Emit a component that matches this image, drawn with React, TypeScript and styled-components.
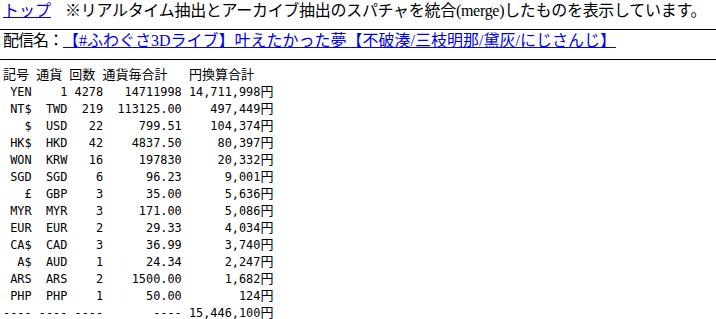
import React from "react";
import styled, { createGlobalStyle } from "styled-components";

interface IRow {
    sign: string;
    code: string;
    count: string;
    total: string;
    yen: string;
}

const GlobalStyle = createGlobalStyle`
    body {
        margin: 0;
        background: #ffffff;
        color: #000000;
        font-family: "Liberation Serif", "Noto Sans CJK JP", serif;
        font-size: 16px;
    }
`;

const Page = styled.div`
    width: 716px;
    overflow: hidden;
`;

const Bar = styled.div`
    display: flex;
    align-items: baseline;
    white-space: nowrap;
    padding: 0 0 7px 3px;
    line-height: 22px;
    border-bottom: 1px solid #000000;
`;

const A = styled.a`
    color: #0000ee;
    text-decoration: underline;
    cursor: pointer;
`;

const Note = styled.span<{ $gap: number; $tight: number }>`
    margin-left: ${(p) => p.$gap}px;
    letter-spacing: ${(p) => p.$tight}px;
`;

const Pre = styled.div`
    margin-top: 7px;
    padding-left: 3px;
    font-family: "DejaVu Sans Mono", monospace;
    font-size: 11.88px;
`;

const Line = styled.div`
    height: 17px;
    line-height: 17px;
    white-space: pre;
    overflow: visible;
`;

const Wide = styled.span`
    font-family: "Noto Sans CJK JP", sans-serif;
    font-size: 13px;
    line-height: 0;
`;

const rows: IRow[] = [
    { sign: "YEN", code: "1", count: "4278", total: "14711998", yen: "14,711,998" },
    { sign: "NT$", code: "TWD", count: "219", total: "113125.00", yen: "497,449" },
    { sign: "$", code: "USD", count: "22", total: "799.51", yen: "104,374" },
    { sign: "HK$", code: "HKD", count: "42", total: "4837.50", yen: "80,397" },
    { sign: "WON", code: "KRW", count: "16", total: "197830", yen: "20,332" },
    { sign: "SGD", code: "SGD", count: "6", total: "96.23", yen: "9,001" },
    { sign: "£", code: "GBP", count: "3", total: "35.00", yen: "5,636" },
    { sign: "MYR", code: "MYR", count: "3", total: "171.00", yen: "5,086" },
    { sign: "EUR", code: "EUR", count: "2", total: "29.33", yen: "4,034" },
    { sign: "CA$", code: "CAD", count: "3", total: "36.99", yen: "3,740" },
    { sign: "A$", code: "AUD", count: "1", total: "24.34", yen: "2,247" },
    { sign: "ARS", code: "ARS", count: "2", total: "1500.00", yen: "1,682" },
    { sign: "PHP", code: "PHP", count: "1", total: "50.00", yen: "124" },
];

const line = (r: IRow) =>
    r.sign.padStart(4) + " " + r.code.padStart(4) + " " + r.count.padStart(4) + " " +
    r.total.padStart(10) + " " + r.yen.padStart(10);

function App() {
    return (
        <Page>
            <GlobalStyle />
            <Bar>
                <A>トップ</A>
                <Note $gap={14} $tight={-0.3}>※リアルタイム抽出とアーカイブ抽出のスパチャを統合(merge)したものを表示しています。</Note>
            </Bar>
            <Bar>
                <Note $gap={0} $tight={-1}>配信名：</Note>
                <A>【#ふわぐさ3Dライブ】叶えたかった夢【不破湊/三枝明那/黛灰/にじさんじ】</A>
            </Bar>
            <Pre>
                <Line>
                    <Wide>記号</Wide> <Wide>通貨</Wide> <Wide>回数</Wide> <Wide>通貨毎合計</Wide>{"   "}<Wide>円換算合計</Wide>
                </Line>
                {rows.map((r) => (
                    <Line key={r.code}>
                        {line(r)}<Wide>円</Wide>
                    </Line>
                ))}
                <Line>
                    {"---- ---- ----       ---- " + "15,446,100".padStart(10)}<Wide>円</Wide>
                </Line>
            </Pre>
        </Page>
    );
}

export default App;
